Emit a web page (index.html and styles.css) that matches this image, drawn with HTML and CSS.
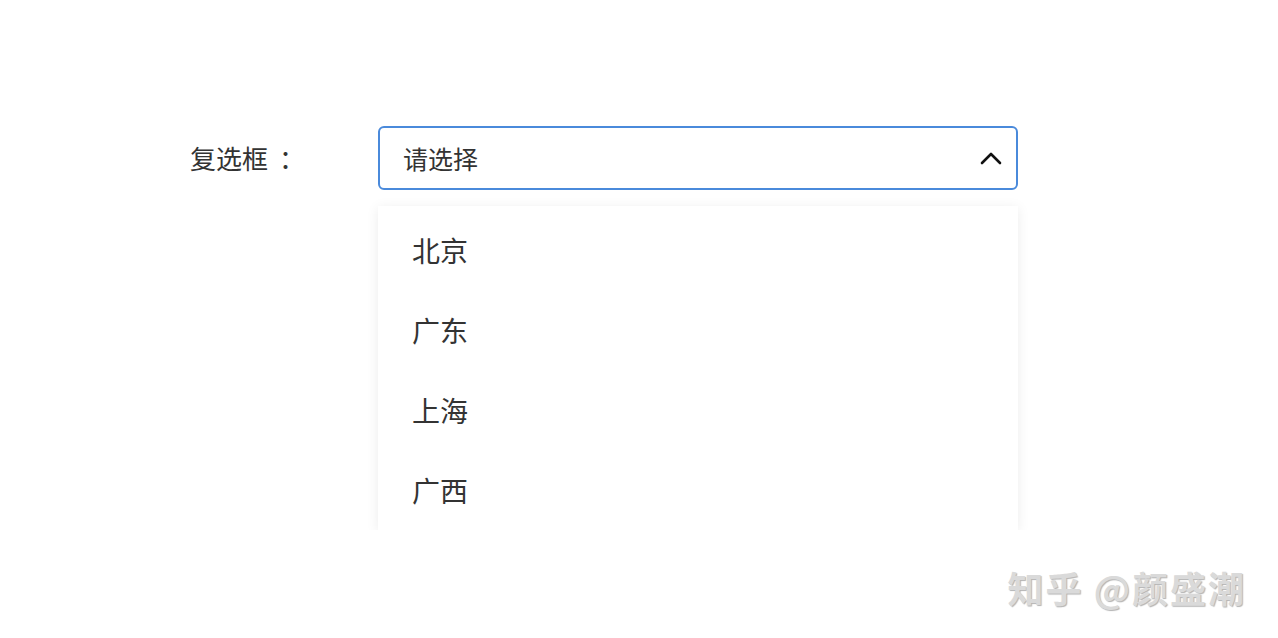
FILE: index.html
```html
<!DOCTYPE html>
<html lang="zh-CN">

<head>
  <meta charset="UTF-8" />
  <title>复选框</title>
  <link rel="stylesheet" href="styles.css">
</head>

<body>

  <!-- Form row -->
  <div class="form">
    <div class="form-item">
      <label class="form-label">复选框<span class="colon">：</span></label>
      <div class="select">
        <div class="select-input">
          <span class="placeholder">请选择</span>
          <svg class="arrow" width="22" height="14" viewBox="0 0 22 14">
            <path d="M2 12 L11 3 L20 12" fill="none" stroke="#111" stroke-width="2.6" stroke-linecap="round" stroke-linejoin="round" />
          </svg>
        </div>
        <ul class="dropdown">
          <li>北京</li>
          <li>广东</li>
          <li>上海</li>
          <li>广西</li>
        </ul>
      </div>
    </div>
  </div>

  <div class="watermark">知乎 @颜盛潮</div>

</body>

</html>
```

FILE: styles.css
```css
body {
  margin: 0;
  padding: 0;
  background: #fff;
  font-family: "Noto Sans CJK SC", "Noto Sans", sans-serif;
  color: #333;
}

.form {
  padding: 126px 0 0 190px;
}

.form-item {
  display: flex;
  align-items: flex-start;
}

.form-label {
  width: 188px;
  height: 64px;
  line-height: 64px;
  font-size: 26px;
  color: #333;
}

.colon {
  margin-left: 11px;
}

.select {
  width: 640px;
}

.select-input {
  box-sizing: border-box;
  height: 64px;
  border: 2px solid #4a8adb;
  border-radius: 6px;
  padding: 0 14px 0 23px;
  display: flex;
  align-items: center;
  justify-content: space-between;
}

.placeholder {
  font-size: 25px;
  color: #333;
}

.arrow {
  display: block;
}

.dropdown {
  list-style: none;
  margin: 16px 0 0;
  padding: 4px 0 0;
  background: #fff;
  box-shadow: 0 2px 12px rgba(0, 0, 0, 0.08);
}

.dropdown li {
  height: 80px;
  line-height: 80px;
  padding-left: 34px;
  font-size: 28px;
  color: #333;
}

.watermark {
  position: absolute;
  right: 32px;
  top: 561px;
  font-size: 36px;
  font-weight: bold;
  color: #dadada;
  text-shadow: 1px 1px 1px rgba(0, 0, 0, 0.3), -1px -1px 0 #fff;
  letter-spacing: 2px;
}
```
